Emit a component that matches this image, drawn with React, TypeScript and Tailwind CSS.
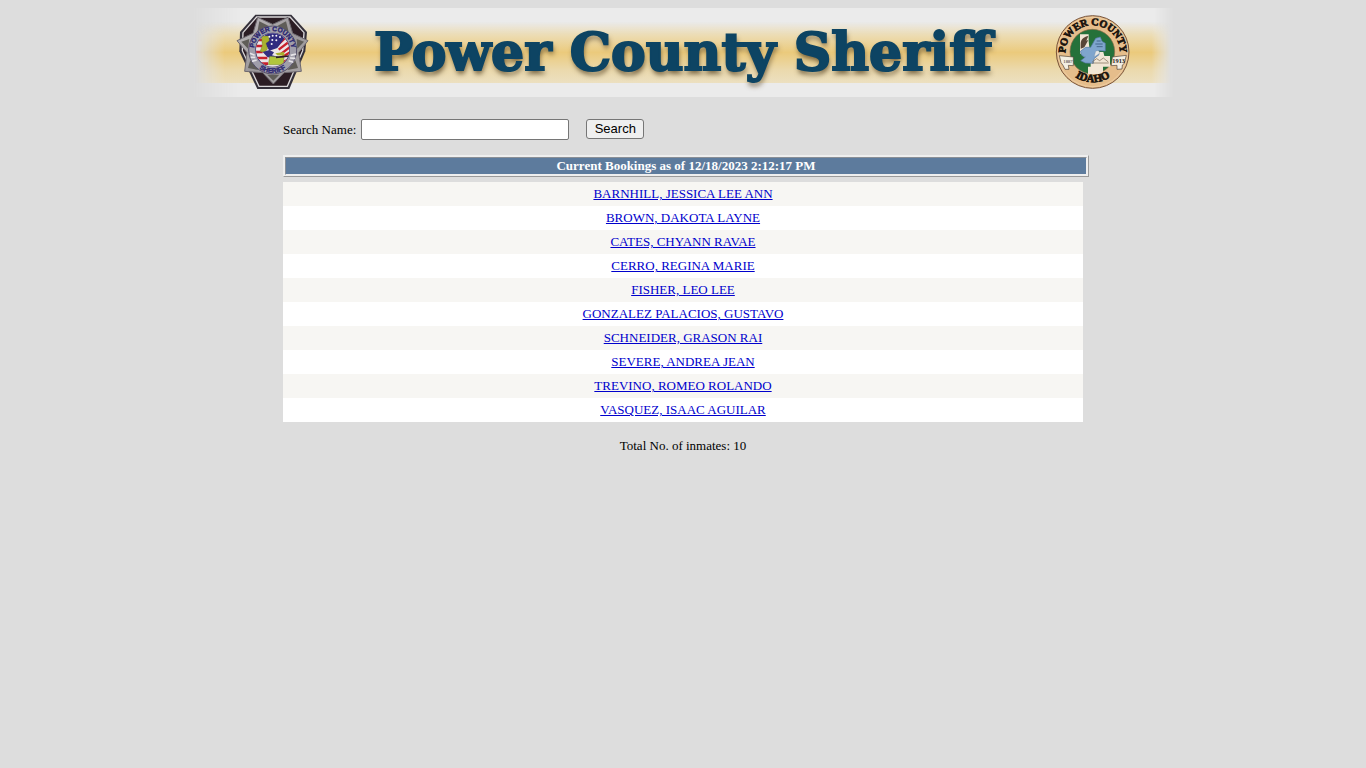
import { useState } from 'react';

const inmates = [
  'BARNHILL, JESSICA LEE ANN',
  'BROWN, DAKOTA LAYNE',
  'CATES, CHYANN RAVAE',
  'CERRO, REGINA MARIE',
  'FISHER, LEO LEE',
  'GONZALEZ PALACIOS, GUSTAVO',
  'SCHNEIDER, GRASON RAI',
  'SEVERE, ANDREA JEAN',
  'TREVINO, ROMEO ROLANDO',
  'VASQUEZ, ISAAC AGUILAR',
];

function SheriffBadge() {
  return (
    <svg className="h-[88px] w-[90px] shrink-0" viewBox="0 0 270 264" role="img" aria-label="Power County Sheriff badge">
      <defs>
        <path id="badgeTop" d="M80 140 A56 56 0 1 1 188 140" />
        <path id="badgeBottom" d="M65 126 A69 69 0 0 0 203 126" />
        <clipPath id="badgeCore">
          <circle cx="134" cy="126" r="50" />
        </clipPath>
        <linearGradient id="silver" x1="0" y1="0" x2="1" y2="1">
          <stop offset="0" stopColor="#c2bec0" />
          <stop offset="0.5" stopColor="#9b989b" />
          <stop offset="1" stopColor="#a8a4a6" />
        </linearGradient>
      </defs>
      <path d="M82 20 H190 L237 72 L232 130 L184 243 H88 L34 130 L36 72 Z" fill="#34303a" />
      <path d="M86 27 H186 L228 74 L224 128 L178 235 H93 L43 128 L45 74 Z" fill="#2b1d24" stroke="#d9d6d8" strokeWidth="4" />
      <path
        d="M89 28 L134 49 L180 28 L194 76 L240 98 L212 134 L220 190 L168 194 L136 228 L104 194 L50 190 L57 134 L27 98 L75 76 Z"
        fill="url(#silver)"
        stroke="#6d686f"
        strokeWidth="3"
      />
      <g fill="#5f5d58">
        <path d="M94 40 L122 54 L88 72 Z" />
        <path d="M174 40 L148 54 L182 72 Z" />
        <path d="M40 101 L64 93 L60 122 Z" />
        <path d="M228 101 L206 93 L208 122 Z" />
        <path d="M60 180 L67 157 L92 186 Z" />
        <path d="M210 180 L202 157 L178 186 Z" />
        <path d="M118 200 H154 L136 218 Z" />
      </g>
      <circle cx="134" cy="126" r="72" fill="#a09eaa" stroke="#55506a" strokeWidth="3" />
      <g fill="#2b2670" stroke="#2b2670" fontFamily="Liberation Sans" fontWeight="700" fontSize="20">
        <text textAnchor="middle">
          <textPath href="#badgeTop" startOffset="50%">POWER COUNTY</textPath>
        </text>
        <text textAnchor="middle">
          <textPath href="#badgeBottom" startOffset="50%">SHERIFF</textPath>
        </text>
      </g>
      <path d="M66 136 L80 142 M68 148 L82 148 M72 160 L86 156 M188 142 L204 138 M186 150 L202 151 M182 158 L196 163" stroke="#e6e4e8" strokeWidth="5" />
      <circle cx="134" cy="126" r="52" fill="#332c68" />
      <g clipPath="url(#badgeCore)">
        <rect x="82" y="74" width="104" height="104" fill="#ece6e7" />
        <path d="M82 96 H106 M82 114 H104 M82 132 H104 M82 150 H118 M92 167 H120" stroke="#c8212d" strokeWidth="8" />
        <path d="M148 112 L182 80 M152 125 L190 96 M160 137 L190 114 M156 151 L188 132 M156 168 L184 152" stroke="#c8212d" strokeWidth="7" />
        <path d="M112 74 H162 L168 92 L148 120 L124 128 L110 104 Z" fill="#302b80" />
        <path d="M100 84 L122 84 L124 98 L114 106 L119 122 L111 132 L96 131 L103 112 Z" fill="#a8b22e" stroke="#59622a" />
        <path d="M104 132 L124 126 L138 133 L132 142 L150 146 L144 154 L118 147 Z" fill="#333080" />
        <path d="M142 136 L168 132 L170 143 L148 142 Z" fill="#a8b22e" />
        <path d="M125 145 L168 148 L167 170 H121 Z" fill="#b1c53d" stroke="#59622a" />
        <path d="M144 148 L184 144" stroke="#2b1d24" strokeWidth="5" />
        <g fill="#f4f2f6">
          <circle cx="124" cy="86" r="3" />
          <circle cx="134" cy="83" r="3" />
          <circle cx="145" cy="83" r="3" />
          <circle cx="156" cy="87" r="3" />
          <circle cx="133" cy="96" r="3" />
          <circle cx="145" cy="97" r="3" />
          <circle cx="131" cy="108" r="3" />
        </g>
      </g>
    </svg>
  );
}

function CountySeal() {
  return (
    <svg className="h-[88px] w-[90px] shrink-0" viewBox="0 0 270 264" role="img" aria-label="Power County, Idaho seal">
      <defs>
        <path id="sealTop" d="M55 156 A82 82 0 1 1 213 156" />
        <path id="sealBottom" d="M42 148 A94 94 0 0 0 226 148" />
      </defs>
      <circle cx="134" cy="132" r="109" fill="#e5bd8b" stroke="#79543a" strokeWidth="3" />
      <circle cx="134" cy="132" r="104" fill="none" stroke="#f0d3ac" strokeWidth="2" />
      <circle cx="133" cy="131" r="67" fill="#25713a" stroke="#8b6a45" strokeWidth="2" />
      <path d="M96 79 H122 V100 L124 118 L136 132 H166 L169 144 H186 V176 H165 V198 H120 V176 H128 V160 L112 150 L96 136 Z" fill="#f1e6d5" />
      <path d="M98 108 C98 92 110 86 121 84 L115 98 L121 96 L109 118 L98 122 Z" fill="#584637" />
      <path d="M97 130 L113 118 L128 118 L143 91 L157 87 L162 100 L172 106 V129 L152 128 L153 140 L138 152 L136 166 L112 165 L98 158 L112 147 L102 143 Z" fill="#7fa5cd" stroke="#5277a3" strokeWidth="2" />
      <path d="M143 130 C151 124 159 132 151 139 L138 147 Z" fill="#e8e8e6" stroke="#68839f" strokeWidth="1" />
      <path d="M142 108 H164 M146 99 H158 M146 116 H164" stroke="#45678d" strokeWidth="3" />
      <path d="M133 161 L146 152 L155 158 L166 150 L181 162 M132 165 H182" fill="none" stroke="#75644e" strokeWidth="2" />
      <g fill="#f3eee2" stroke="#4e4133" strokeWidth="2">
        <path d="M34 143 L76 147 V173 L61 172 L63 184 L51 184 L45 172 L39 164 Z" />
        <path d="M193 147 L235 142 L229 166 L223 171 L222 183 L207 184 L207 172 L190 173 Z" />
      </g>
      <g fill="#1d1814" fontFamily="Liberation Serif">
        <text x="46" y="165" fontSize="14">1887</text>
        <text x="193" y="166" fontSize="19" fontWeight="700">1913</text>
      </g>
      <g fill="#17110c" stroke="#17110c" strokeWidth="2" fontFamily="Liberation Serif" fontWeight="700">
        <text textAnchor="middle" fontSize="31">
          <textPath href="#sealTop" startOffset="50%">POWER COUNTY</textPath>
        </text>
        <text textAnchor="middle" fontSize="33">
          <textPath href="#sealBottom" startOffset="50%">IDAHO</textPath>
        </text>
      </g>
    </svg>
  );
}

function Banner() {
  return (
    <header className="relative mx-auto flex h-[89px] max-w-[1024px] items-start justify-between px-[57px]">
      <div className="absolute inset-0 bg-[#ebebeb] [mask-image:linear-gradient(to_right,transparent_2%,black_7%,black_96%,transparent_98%)]" />
      <div className="absolute inset-x-6 top-3.5 bottom-3.5 bg-[linear-gradient(to_bottom,transparent,#ecdcb3_22%,#ebca7c_50%,#ebd9ac_78%,#ece0c0)] [mask-image:linear-gradient(to_right,transparent,black_3%,black_98%,transparent)]" />
      <div className="relative">
        <SheriffBadge />
      </div>
      <h1 className="relative flex-1 text-center font-['DejaVu_Serif',serif] text-[52px] leading-[88px] font-bold whitespace-nowrap text-[#0d4463] [-webkit-text-stroke:2px_#0d4463] [text-shadow:1px_4px_5px_#5c4a2acc]">
        Power County Sheriff
      </h1>
      <div className="relative">
        <CountySeal />
      </div>
    </header>
  );
}

export default function App() {
  const [name, setName] = useState('');

  return (
    <div className="min-h-screen bg-[#dddddd] px-2 pt-2 font-['Liberation_Serif',serif] text-[13px] leading-4 text-black">
      <Banner />

      <main className="mx-auto mt-[22px] max-w-[800px]">
        <form className="flex items-center" onSubmit={(e) => e.preventDefault()}>
          <label htmlFor="name" className="mr-[5px]">Search Name:</label>
          <input
            id="name"
            type="text"
            value={name}
            onChange={(e) => setName(e.target.value)}
            className="h-[21px] w-52 rounded-xs border border-[#767676] bg-white px-1 font-['Liberation_Sans',sans-serif]"
          />
          <button
            type="submit"
            className="ml-[17px] h-5 w-[58px] self-start rounded-[3px] border border-[#767676] bg-[#efefef] font-['Liberation_Sans',sans-serif] leading-4"
          >
            Search
          </button>
        </form>

        <div className="mt-[15px] -mr-1.5 border border-t-[#eeeeee] border-r-[#9a9a9a] border-b-[#9a9a9a] border-l-[#eeeeee] bg-[#eeeeee] p-px">
          <h2 className="border border-t-[#8a8f96] border-r-[#eeeeee] border-b-[#eeeeee] border-l-[#8a8f96] bg-[#5d7b9d] text-center font-bold text-white">
            Current Bookings as of 12/18/2023 2:12:17 PM
          </h2>
        </div>

        <table className="mt-[5px] w-full border-collapse" aria-label="Current bookings">
          <tbody>
            {inmates.map((inmate) => (
              <tr key={inmate} className="h-6 bg-white odd:bg-[#f7f6f3]">
                <td className="p-1 text-center">
                  <a href="#" className="text-[#0000cc] underline">{inmate}</a>
                </td>
              </tr>
            ))}
          </tbody>
        </table>

        <p className="mt-4 text-center">Total No. of inmates: {inmates.length}</p>
      </main>
    </div>
  );
}
